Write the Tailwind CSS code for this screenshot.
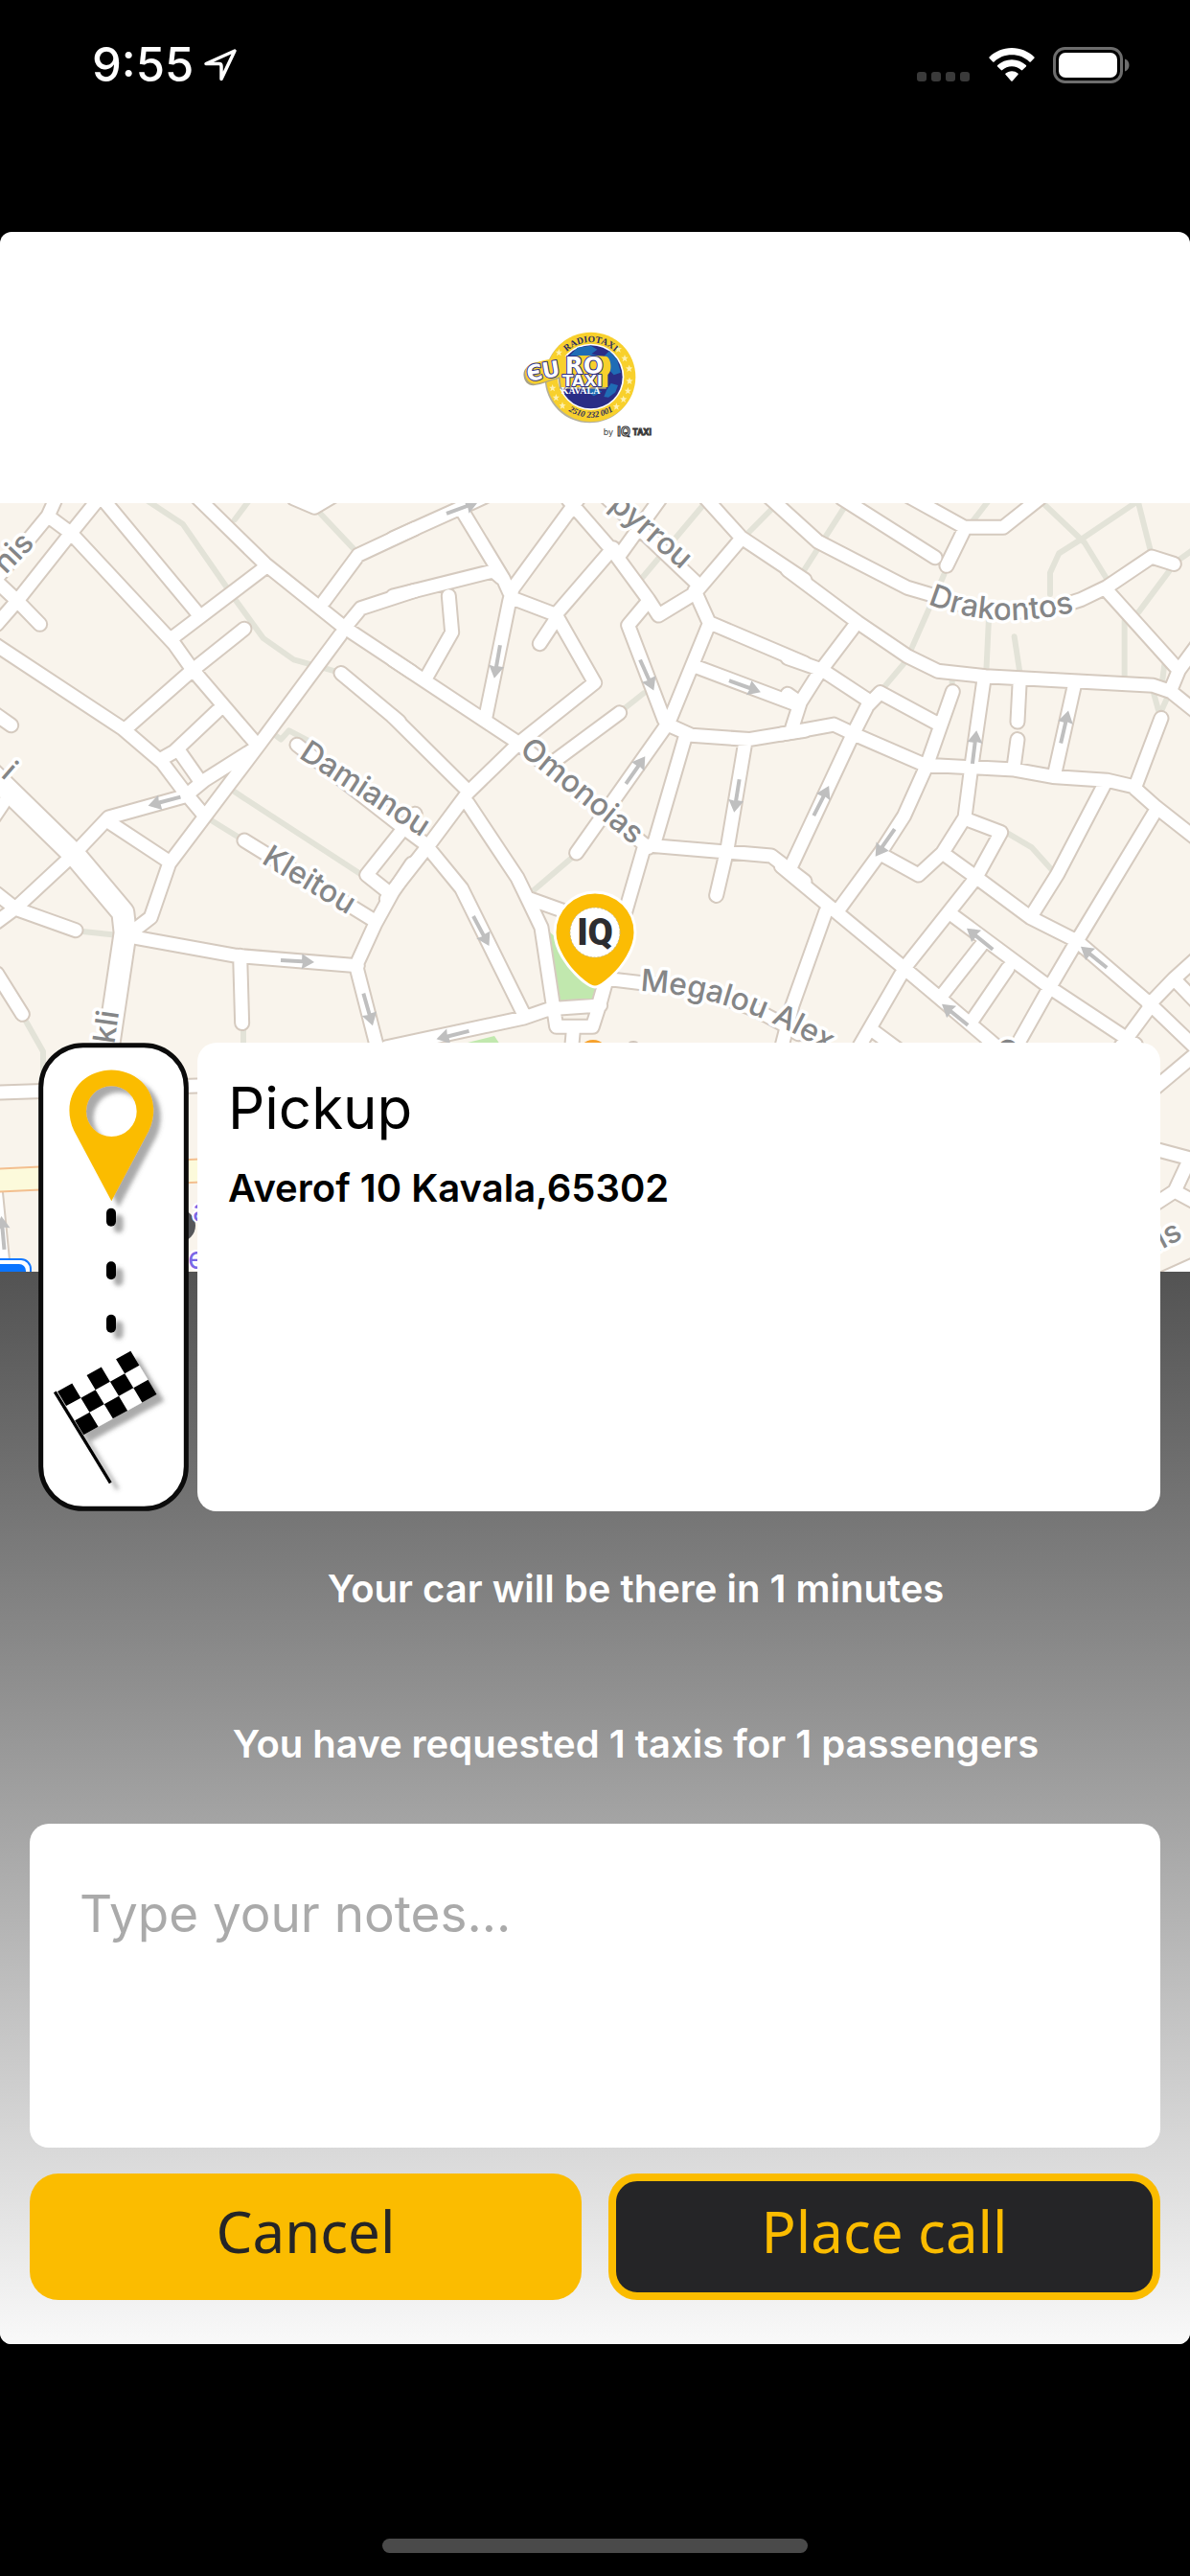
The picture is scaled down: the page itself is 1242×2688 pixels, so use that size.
<!DOCTYPE html>
<html lang="en">
<head>
    <meta charset="UTF-8">
    <meta name="viewport" content="width=device-width, initial-scale=1.0">
    <title>Euro Taxi Kavala - Place call</title>
    <script src="https://cdn.jsdelivr.net/npm/@tailwindcss/browser@4"></script>
</head>
<body class="min-h-screen bg-black font-['Inter','Liberation_Sans',sans-serif]">
    <!-- Status bar -->
    <header class="h-[242px] text-white">
        <div class="flex h-[135px] items-center justify-between pl-24 pr-[63px]">
            <div class="flex items-center gap-[10px]">
                <span class="text-[49px] leading-[56px] font-medium">9:55</span>
                <svg class="h-9 w-9" viewBox="0 0 36 36" fill="none" stroke="currentColor" stroke-width="3.5" stroke-linejoin="round">
                    <path d="M33 3 3 16.500h13.500q2.500 0 2.500 2.500v13.500Z"/>
                </svg>
            </div>
            <div class="flex items-center gap-[19px]">
                <svg class="h-9 w-14" viewBox="0 0 56 36" fill="#3a3a3a">
                    <rect x="0" y="25" width="10" height="10" rx="3"/>
                    <rect x="15" y="25" width="10" height="10" rx="3"/>
                    <rect x="30" y="25" width="10" height="10" rx="3"/>
                    <rect x="45" y="25" width="10" height="10" rx="3"/>
                </svg>
                <svg class="h-9 w-12" viewBox="0 0 48 36" fill="currentColor">
                    <path d="M24 0C14.800 0 6.500 3.600.6 9.400a1 1 0 0 0 0 1.400l3.600 3.600a1 1 0 0 0 1.400 0C10.300 9.800 16.800 7.200 24 7.200s13.700 2.600 18.400 7.200a1 1 0 0 0 1.400 0l3.600-3.600a1 1 0 0 0 0-1.400C41.500 3.600 33.200 0 24 0Z"/>
                    <path d="M24 12.200c-5.700 0-11 2.200-14.900 5.900a1 1 0 0 0 0 1.400l3.700 3.600a1 1 0 0 0 1.400 0c2.600-2.400 6-3.800 9.800-3.800s7.200 1.400 9.800 3.800a1 1 0 0 0 1.400 0l3.700-3.600a1 1 0 0 0 0-1.400c-3.900-3.700-9.200-5.900-14.900-5.900Z"/>
                    <path d="M24 24.200c-2.500 0-4.700.9-6.400 2.400a1 1 0 0 0 0 1.500l5.700 6.400a1 1 0 0 0 1.400 0l5.700-6.400a1 1 0 0 0 0-1.500 9.600 9.600 0 0 0-6.400-2.400Z"/>
                </svg>
                <svg class="h-[38px] w-20" viewBox="0 0 80 38">
                    <rect x="1.500" y="1.500" width="70" height="35" rx="11" fill="none" stroke="#6d6d6d" stroke-width="3"/>
                    <rect x="6" y="6" width="61" height="26" rx="7" fill="#fff"/>
                    <path d="M75 12.500c3 1.200 4.500 3.500 4.500 6.500S78 24.300 75 25.500Z" fill="#6d6d6d"/>
                </svg>
            </div>
        </div>
    </header>

    <main class="overflow-hidden rounded-xl bg-white">
        <!-- Company logo -->
        <div class="flex justify-center pt-[78px] pb-[55px]">
            <svg class="h-[150px] w-[200px]" viewBox="0 0 600 450" role="img" aria-label="Euro Taxi Kavala by IQTaxi">
                <defs>
                    <path id="arc-top" d="M178 220a109 109 0 0 1 218 0"/>
                    <path id="arc-bottom" d="M160 220a127 127 0 0 0 254 0"/>
                    <path id="star" d="m0-11 3 8 8 .5-6.500 5L7 11 0 6.500-7 11l2.500-8.500-6.500-5L-3-3Z"/>
                </defs>
                <circle cx="283" cy="224" r="140" fill="#b5b09a"/>
                <circle cx="287" cy="220" r="140" fill="#f8d02c"/>
                <circle cx="287" cy="220" r="104" fill="#fff"/>
                <circle cx="287" cy="220" r="99" fill="#2a2d86"/>
                <path d="m215 160 30-32 42-6 20 12-18 14 30 8-24 16-50 6-24 14Zm130-22 24 28 12 40-22 8-22-24-30-12ZM336 262l14-22 22 6-8 22-22 16-14-2Zm-66 0 30-8 22 12-26 14Z" fill="#1f6cb5"/>
                <g fill="#fdf0b0">
                    <use href="#star" x="187" y="143"/><use href="#star" x="173" y="172"/>
                    <use href="#star" x="167" y="254"/><use href="#star" x="178" y="284"/><use href="#star" x="198" y="309"/>
                    <use href="#star" x="373" y="132"/><use href="#star" x="393" y="161"/><use href="#star" x="407" y="193"/>
                    <use href="#star" x="408" y="232"/><use href="#star" x="403" y="263"/><use href="#star" x="389" y="289"/><use href="#star" x="367" y="312"/>
                </g>
                <g class="font-['Liberation_Serif',serif] font-bold" fill="#2a2d60" text-anchor="middle">
                    <text font-size="29"><textPath href="#arc-top" startOffset="50%">RADIOTAXI</textPath></text>
                    <text font-size="27" class="italic"><textPath href="#arc-bottom" startOffset="50%">2510 232 001</textPath></text>
                </g>
                <!-- Yellow plate behind the wordmark -->
                <path d="M82 214c-4-20 10-38 36-40 30-8 60-14 84-18 50-4 100-4 134 0 16 6 18 50 4 56l0 40H194l-4-32c-24 6-50 18-78 22-18 0-28-14-30-28Z" transform="translate(-5 5)" fill="#a9a288"/>
                <path d="M82 214c-4-20 10-38 36-40 30-8 60-14 84-18 50-4 100-4 134 0 16 6 18 50 4 56l0 40H194l-4-32c-24 6-50 18-78 22-18 0-28-14-30-28Z" fill="#f8d02c"/>
                <g class="font-['DejaVu_Sans',sans-serif] font-bold" fill="#fff" stroke="#2a2d86" stroke-width="6" paint-order="stroke" stroke-linejoin="round">
                    <text x="90" y="234" font-size="68" transform="rotate(-10 90 234)">ЄU</text>
                    <text x="206" y="209" font-size="74">RO</text>
                    <text x="198" y="250" font-size="50">TAXI</text>
                </g>
                <text x="194" y="273" font-size="30" fill="#fff" class="font-['Liberation_Serif',serif] font-bold">KAVALA</text>
                <g class="font-['Inter',sans-serif]">
                    <text x="326" y="403" font-size="27" fill="#444">by</text>
                    <text x="370" y="404" font-size="38" fill="#ddd" stroke="#333" stroke-width="3" class="font-bold">IQ</text>
                    <text x="418" y="402" font-size="25" fill="#ddd" stroke="#333" stroke-width="3" class="font-bold">TAXI</text>
                </g>
            </svg>
        </div>

        <!-- Map -->
        <div class="h-[802px] bg-[#f9f4ec]">
            <svg class="h-full w-full" viewBox="0 525 1242 802" preserveAspectRatio="xMidYMid slice" role="img" aria-label="Map of the pickup area">
                <defs>
                    <!-- Street network, one group per map tile -->
                    <g id="streets">
                        <path transform="translate(0 520) scale(.3333 .37)" vector-effect="non-scaling-stroke" d="M175 0 150 50-10 225M150 50 222 98M310 0 222 98 55 288-10 355M320 0 615 320M222 98 545 410 600 480 800 690M545 390 830 195M620 0 830 185 1075 362 1290 490M1015 290 1122 160 1300 85M1075 370 1130 310 1300 260M1066 385 815 690 530 1030 472 1182 410 1225M765 368 595 490 400 645M-10 415 385 650 508 745 575 825 640 895M505 735 545 715 680 600M565 718 625 795M790 710 640 795 580 840 340 900 235 1000 50 1155-10 1195M345 915 530 1025M10 860-20 900M-10 1115 50 1158 237 1218M400 1235 740 1290 1120 1318M752 1290 758 1480M1190 1580 1115 1318 1175 1200 1230 1110 1290 1030M1300 890 1148 1062 1215 1110M765 965 1170 1190M930 695 1250 920 1340 980M1068 493 1250 630M35 640-20 605M125 355 55 290-10 235M70 1455-10 1340M920 0 985 25 1050-10"/>
                        <path transform="translate(410 520) scale(.3333 .37)" vector-effect="non-scaling-stroke" d="M0 113 200 32 300-10M217 35 345 225 365 265M0 276 315 205 340 225M590-10 375 255 365 290 290 620M370 280 510 328 690 140M515 335 460 410M515 335 632 520 395 690 235 830 115 975-20 1130M550 5 690 150 800 285 832 330 945 268 1090 115M710 160 850-15M800 290 737 358 850 625M945 260 990 350 1290 465M990 355 865 630 575 1000M950 475 1260 580M865 640 935 668 1115 680 1215 665 1290 655M915 675 818 975 785 990 640 1440M1105 680 1048 985 1013 1120M790 978 1185 1008 1290 1080M660-10 950 238M970-10 1090 110 1290 230M0 455 385 685 800 985M0 615 235 825M175 275 185 378 105 505M710 605 500 745M235 860 390 1070 425 1135 465 1210 512 1490 625 1490 650 1420 670 1355M430 1130 570 1175M115 990 215 1100 410 1455M-20 1548 410 1465 490 1440 650 1430M565 1500 555 1600M670 1355 780 1367Q1050 1380 1270 1510"/>
                        <path transform="translate(822 520) scale(.3333 .37)" vector-effect="non-scaling-stroke" d="M-60-5 95 122 375 252 450 272Q700 360 920 285L1000 250 1140 165 1210 185M170 0 462 167M380-5 555 82 675 82 790 0M555 85 498 190M0 202 220 350 375 445 470 487 620 502 1145 528 1200 545 1290 610M205 365 100 490 40 575 15 645M0 450 110 485 245 565M0 552 28 570M465 633 290 548 250 585 205 665 10 1040M-20 665 145 638 215 668 430 752 710 765 830 785 1000 795 1080 812 1150 868 1280 960M517 545 435 755 365 895 290 1000 160 1160M615 510 575 760 555 900 485 1000 410 1062 295 1005M727 510 720 630M720 680 708 760M900 520 838 770M560 905 668 942 590 1070 370 1320 225 1545M485 1000 600 1075 760 1182 905 1248 1130 1422 1290 1560M1130 1430 1210 1355 1290 1290M1130 1440 1040 1550M1215 1360 1290 1430M990 810 845 1060 765 1175M1150 885 905 1250 820 1380 720 1540M520 1178 825 1382 1090 1540M605 1262 485 1400M690 1325 580 1470M-20 1038 160 1172 365 1325 480 1412 660 1550M120 1165 15 1430-25 1570M265 1500 370 1570M1000 260 1225 485 1200 540M1225 485 1290 405M1170 620 1090 810"/>
                        <path d="M0 1140 206 1133M1200 1140 1250 1098M1190 1195 1250 1211M1240 1213 1226 1243 1200 1260M1226 1243 1250 1256M1190 1345 1250 1318M-6 1230 4 1330"/>
                    </g>
                    <path id="avenue" transform="translate(0 520) scale(.3333 .37)" vector-effect="non-scaling-stroke" d="M-40 765 235 1007 385 1168 392 1225 335 1570"/>
                    <path id="oneway" d="M-17-2H5v-6L18 0 5 8 6 2h-23Z"/>
                    <path id="drakontos" d="M968 630Q1050 664 1150 630"/>
                    <path id="megalou" d="M668 1034C740 1038 800 1056 900 1120"/>
                </defs>

                <!-- Footpaths -->
                <g fill="none" stroke="#e3e3d8" stroke-width="6" stroke-linejoin="round" stroke-linecap="round">
                    <path transform="translate(0 520) scale(.3333 .37)" vector-effect="non-scaling-stroke" d="M450 0 572 72 740 290 825 395 920 455 1060 490M785 0 735 60M1000 40 1110 145M865 670 880 680 905 655 1000 700M735 828 1130 1060M665 910 755 960M245 1220 365 1232M75 1465 135 1560 135 1700M762 1480 762 1600"/>
                    <path transform="translate(410 520) scale(.3333 .37)" vector-effect="non-scaling-stroke" d="M985 5 780 225M1220 0 1110 100M785 550 715 600M565 1010 435 1110"/>
                    <path transform="translate(822 520) scale(.3333 .37)" vector-effect="non-scaling-stroke" d="M185 15 50 205M635 0 575 70M490 215 385 430M365 465 300 535M515 505V540M630 340 622 490M710 390 727 490M790 5 930 125 1005 235M1110 0 915 118 850 155 822 210V270M1095 0 1140 160M1270 145 1215 180M1195 205 1100 320 1055 345V510M1180 470 1172 525M1145 545 1165 610 1190 560M690 945 765 985 825 1045"/>
                </g>

                <!-- Park -->
                <path d="M573 972 635 1026 624 1043 583 1046ZM480 1090 516 1081 522 1090Z" fill="#c1e8ae"/>

                <g fill="none" stroke-linecap="round" stroke-linejoin="round">
                    <g stroke="#d5cabf">
                        <use href="#streets" stroke-width="17"/>
                        <use href="#avenue" stroke-width="26"/>
                    </g>
                    <g stroke="#fff">
                        <use href="#streets" stroke-width="13"/>
                        <use href="#avenue" stroke-width="22"/>
                    </g>
                    <path d="M-10 1232 220 1221" stroke="#f3bf8f" stroke-width="26"/>
                    <path d="M-10 1232 220 1221" stroke="#fcfadb" stroke-width="22"/>
                </g>

                <!-- One-way arrows -->
                <g fill="#bfbfbf">
                    <use href="#oneway" transform="translate(172 836) rotate(165)"/>
                    <use href="#oneway" transform="translate(310 1003) rotate(3)"/>
                    <use href="#oneway" transform="translate(384 1053) rotate(74)"/>
                    <use href="#oneway" transform="translate(482 530) rotate(-20)"/>
                    <use href="#oneway" transform="translate(519 690) rotate(100)"/>
                    <use href="#oneway" transform="translate(675 704) rotate(66)"/>
                    <use href="#oneway" transform="translate(663 804) rotate(-55)"/>
                    <use href="#oneway" transform="translate(777 716) rotate(20)"/>
                    <use href="#oneway" transform="translate(769 830) rotate(99)"/>
                    <use href="#oneway" transform="translate(502 971) rotate(62)"/>
                    <use href="#oneway" transform="translate(473 1080) rotate(166)"/>
                    <use href="#oneway" transform="translate(857 836) rotate(-63)"/>
                    <use href="#oneway" transform="translate(924 879) rotate(125)"/>
                    <use href="#oneway" transform="translate(1017 780) rotate(-83)"/>
                    <use href="#oneway" transform="translate(1111 759) rotate(-77)"/>
                    <use href="#oneway" transform="translate(1023 980) rotate(-141)"/>
                    <use href="#oneway" transform="translate(1142 999) rotate(-141)"/>
                    <use href="#oneway" transform="translate(997 1059) rotate(-141)"/>
                    <use href="#oneway" transform="translate(3 1287) rotate(-95)"/>
                </g>

                <!-- Street names -->
                <g class="font-medium" font-size="32" fill="#858687" stroke="#fff" stroke-width="7" stroke-linejoin="round" paint-order="stroke">
                    <text text-anchor="end" transform="translate(37 568) rotate(-46)">nis</text>
                    <text text-anchor="end" transform="translate(6 815) rotate(41)">i</text>
                    <text text-anchor="end" transform="translate(124 1056) rotate(-82)">kli</text>
                    <text transform="translate(311 790) rotate(33)">Damianou</text>
                    <text transform="translate(272 900) rotate(31)">Kleitou</text>
                    <text transform="translate(541 785) rotate(39)">Omonoias</text>
                    <text text-anchor="end" transform="translate(711 595) rotate(41)">pyrrou</text>
                    <text><textPath href="#drakontos">Drakontos</textPath></text>
                    <text><textPath href="#megalou">Megalou Alex</textPath></text>
                    <text transform="translate(1034 1098) rotate(38)">C</text>
                    <text transform="translate(1199 1311) rotate(-28)">llis</text>
                </g>

                <!-- Points of interest -->
                <circle cx="619" cy="1101" r="16" fill="#f6a12c"/>
                <circle cx="661" cy="1094" r="7" fill="#f9f4ec" stroke="#cfc4ba" stroke-width="2"/>
                <circle cx="187" cy="1279" r="17" fill="#55565a"/>
                <g font-size="32" fill="#7a68e6" stroke="#fff" stroke-width="4" paint-order="stroke">
                    <text x="201" y="1274">a</text>
                    <text x="196" y="1324">e</text>
                </g>
                <rect x="-40" y="1314" width="72" height="40" rx="10" fill="#fff" stroke="#1478ff" stroke-width="2"/>
                <rect x="-40" y="1319" width="67" height="40" rx="7" fill="#0a74ff"/>

                <!-- Pickup marker -->
                <path d="M621 1030c-5 0-9-4-13-7-17-14-29-34-29-50a42 42 0 0 1 84 0c0 16-12 36-29 50-4 3-8 7-13 7Z" fill="#fbbc04" stroke="#fff" stroke-width="3"/>
                <circle cx="621" cy="973" r="26" fill="#fff" stroke="#c9b98a" stroke-dasharray="2 2"/>
                <text x="621" y="986" font-size="38" text-anchor="middle" fill="#2d2d30" class="font-['Roboto',sans-serif] font-black">IQ</text>
            </svg>
        </div>

        <!-- Order details -->
        <section class="flex flex-col bg-linear-to-b from-[#535353] to-[#f9f9f9] px-[31px] pb-[46px]">
            <div class="relative -mt-[239px] flex gap-[9px] pl-[9px]">
                <svg class="h-[489px] w-[157px] shrink-0" viewBox="0 0 471 1467" aria-hidden="true">
                    <defs>
                        <filter id="shade" x="-20%" y="-20%" width="150%" height="150%">
                            <feDropShadow dx="23" dy="20" stdDeviation="6" flood-color="#555" flood-opacity=".5"/>
                        </filter>
                    </defs>
                    <rect x="8" y="8" width="455" height="1451" rx="132" fill="#fff" stroke="#0b0b0b" stroke-width="15"/>
                    <g filter="url(#shade)">
                        <path fill="#fbbc00" fill-rule="evenodd" d="M229 496 112 276C84 216 98 156 136 121c54-47 132-47 186 0 38 35 52 95 24 155ZM229 136a79 79 0 1 0 0 158 79 79 0 0 0 0-158Z"/>
                        <rect x="213" y="518" width="30" height="57" rx="15"/>
                        <rect x="213" y="685" width="30" height="57" rx="15"/>
                        <rect x="213" y="851" width="30" height="57" rx="15"/>
                    </g>
                    <g filter="url(#shade)">
                        <path d="M52 1093 226 1378" stroke="#000" stroke-width="10"/>
                        <g transform="matrix(45.800 -25.400 27.300 45.300 60 1092)">
                            <path d="M0 0h5v3H0Z" fill="#fff"/>
                            <path d="M0 0h1v1H0ZM2 0h1v1H2ZM4 0h1v1H4ZM1 1h1v1H1ZM3 1h1v1H3ZM0 2h1v1H0ZM2 2h1v1H2ZM4 2h1v1H4Z"/>
                        </g>
                    </g>
                </svg>
                <div class="grow rounded-[20px] bg-white px-8 pt-8 text-black">
                    <h1 class="text-[60px] leading-[72px]">Pickup</h1>
                    <p class="mt-6 text-[40px] leading-[48px] font-semibold">Averof 10 Kavala,65302</p>
                </div>
            </div>

            <div class="pt-[57px] pl-[85px] text-center text-[40px] leading-[48px] font-semibold text-white">
                <p>Your car will be there in 1 minutes</p>
                <p class="mt-[114px]">You have requested 1 taxis for 1 passengers</p>
            </div>

            <textarea class="mt-[59px] block h-[338px] w-full resize-none rounded-[20px] bg-white px-[52px] pt-[62px] text-[53px] leading-[64px] text-black placeholder:text-[#aaaaaa]" placeholder="Type your notes..." aria-label="Notes"></textarea>

            <div class="mt-[27px] grid grid-cols-2 gap-7 font-['Noto_Sans','Open_Sans',sans-serif] text-[60px] leading-[72px]">
                <button type="button" class="h-[132px] rounded-[30px] bg-[#fbbc00] pb-3 text-[#252527]">Cancel</button>
                <button type="button" class="h-[132px] rounded-[30px] border-8 border-[#fbbc00] bg-[#252527] pb-3 text-[#fbbc00]">Place call</button>
            </div>
        </section>
    </main>

    <!-- Home indicator -->
    <footer class="flex justify-center pt-[203px] pb-6">
        <div class="h-[15px] w-[444px] rounded-full bg-[#4a4a4a]"></div>
    </footer>
</body>
</html>
